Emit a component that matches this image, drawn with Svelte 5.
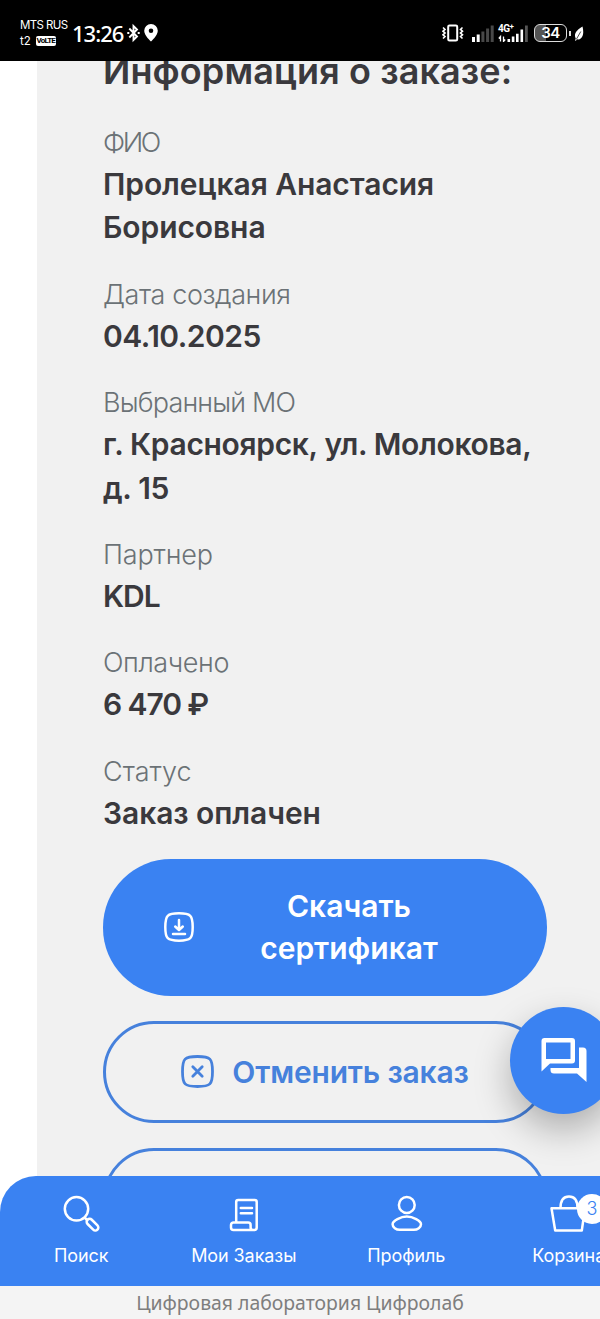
<script>
  const fields = [
    { label: 'ФИО', value: 'Пролецкая Анастасия Борисовна', ls: -2.4, vs: -0.08 },
    { label: 'Дата создания', value: '04.10.2025', ls: -0.42, vs: -0.5 },
    { label: 'Выбранный МО', value: 'г. Красноярск, ул. Молокова, д. 15', ls: -0.83, vs: -0.33 },
    { label: 'Партнер', value: 'KDL', ls: -0.15, vs: -1 },
    { label: 'Оплачено', value: '6 470 ₽', ls: -0.4, vs: -1.1 },
    { label: 'Статус', value: 'Заказ оплачен', ls: 0, vs: -0.08 },
  ];
</script>

<div class="screen">
  <header class="status">
    <div class="carrier">
      <span class="c1">MTS RUS</span>
      <span class="c2">t2 <b>VoLTE</b></span>
    </div>
    <span class="clock">13:26</span>
    <svg class="bt" width="13" height="20" viewBox="0 0 13 20" fill="none" stroke="#fff" stroke-width="1.900">
      <path d="M2.300 5.500 10 13.500 6.500 17V3L10 6.500 2.300 14.500" />
      <path d="M.3 10h2M10.700 10h2" stroke-width="2" />
    </svg>
    <svg class="pin" width="14" height="18" viewBox="0 0 14 18">
      <path fill="#fff" fill-rule="evenodd" d="M7 0a6.800 6.800 0 0 0-6.800 6.800C.2 11.500 7 17.600 7 17.600s6.800-6.100 6.800-10.800A6.800 6.800 0 0 0 7 0Zm0 4.500a2.300 2.300 0 1 1 0 4.600 2.300 2.300 0 0 1 0-4.600Z" />
    </svg>
    <div class="grow"></div>
    <svg class="vib" width="22" height="18" viewBox="0 0 22 18" fill="none" stroke="#fff">
      <rect x="6.200" y="1.500" width="9" height="15" rx="1.300" stroke-width="2" />
      <path d="M1 3.500 3 5.400 1 7.200 3 9 1 10.800 3 12.600 1 14.500M20.500 3.500l-2 1.900 2 1.800-2 1.800 2 1.800-2 1.800 2 1.900" stroke-width="1.600" />
    </svg>
    <svg class="sig" width="22" height="17" viewBox="0 0 22 17">
      <path fill="#fff" d="M0 12h3v5H0zM4.700 9.500h3V17h-3z" />
      <path fill="#484848" d="M9.400 6.500h3V17h-3zM14.100 3.500h3V17h-3zM18.700.5h3V17h-3z" />
    </svg>
    <div class="lte">
      <span>4G<sup>+</sup></span>
      <svg width="31" height="17" viewBox="0 0 31 17">
        <path fill="#fff" d="M9.500 14h2.600v3H9.500zM13.800 11.500h2.600V17h-2.600zM18 8.700h2.600V17H18zM22.500 4.500h2.600V17h-2.600z" />
        <path fill="#555" d="M27 .5h2.800V17H27z" />
        <path fill="none" stroke="#fff" stroke-width="1.300" d="M2.500 16.500v-5L.8 13.500M5.500 11.500v5l1.700-2" />
      </svg>
    </div>
    <div class="battery"><span>34</span></div>
    <i class="nub"></i>
    <svg class="leaf" width="10" height="15" viewBox="0 0 10 15">
      <path fill="#fff" d="M8.500.5C10 6.500 9.500 12 4.500 13.500l-1.800-.2-.7 1.500-1-.3.800-2C-.8 7.500 3 4 8.500.5Z" />
      <path d="M2.500 13 6.800 5.500" stroke="#000" stroke-width=".7" />
    </svg>
  </header>

  <main>
    <section class="card">
      <h1>Информация о заказе:</h1>
      <dl>
        {#each fields as f}
          <div class="field">
            <dt style="letter-spacing:{f.ls}px">{f.label}</dt>
            <dd style="letter-spacing:{f.vs}px">{f.value}</dd>
          </div>
        {/each}
      </dl>
      <div class="actions">
        <button class="btn filled">
          <svg width="30" height="30" viewBox="0 0 30 30" fill="none" stroke="#fff" stroke-width="2.500" stroke-linecap="round" stroke-linejoin="round">
            <path d="M15 1.300c11.700 0 13.700 2 13.700 13.700S26.700 28.700 15 28.700 1.300 26.700 1.300 15 3.300 1.300 15 1.300Z" />
            <path d="M15 8v9.500M11.200 14.500 15 18l3.800-3.500M9 22h12" />
          </svg>
          <span>Скачать сертификат</span>
        </button>
        <button class="btn outline">
          <svg width="33" height="33" viewBox="0 0 33 33" fill="none" stroke="#4681dc" stroke-width="2.800" stroke-linecap="round">
            <path d="M16.500 1.500c13 0 15 2 15 15s-2 15-15 15-15-2-15-15 2-15 15-15Z" />
            <path d="m11.800 11.800 9.400 9.400M21.200 11.800l-9.400 9.400" />
          </svg>
          <span>Отменить заказ</span>
        </button>
        <button class="btn outline" aria-label="Действие"></button>
      </div>
    </section>
    <button class="chat" aria-label="Чат">
      <svg width="46" height="46" viewBox="0 0 46 46">
        <path fill="#fff" fill-rule="evenodd" d="M3.500 0H31a3 3 0 0 1 3 3v19.500a3 3 0 0 1-3 3H9L.5 33.500V3a3 3 0 0 1 3-3ZM5 4.500V21h24.500V4.500Z" />
        <path fill="#fff" d="M38 9.500h4a3.500 3.500 0 0 1 3.500 3.500v31L36 35.500H13a3.500 3.500 0 0 1-3.500-3.500v-2H38Z" />
      </svg>
    </button>
  </main>

  <nav>
    <a class="tab">
      <svg width="36" height="36" viewBox="0 0 36 36" fill="none" stroke="#fff" stroke-width="2.500">
        <circle cx="13.500" cy="12.800" r="11.700" />
        <path d="m21.500 21.500 3.200 3.200" />
        <rect x="22.500" y="25.700" width="14" height="6" rx="3" transform="rotate(45 29.500 28.700)" />
      </svg>
      <span>Поиск</span>
    </a>
    <a class="tab">
      <svg width="36" height="36" viewBox="0 0 36 36" fill="none" stroke="#fff" stroke-width="2.500" stroke-linejoin="round" stroke-linecap="round">
        <path d="M10.200 26.500V6a2 2 0 0 1 2-2h16.500a2 2 0 0 1 2 2v25.500a2.500 2.500 0 0 1-2.500 2.500H7.500a2.500 2.500 0 0 1-2.500-2.500v-2.500a2.500 2.500 0 0 1 2.500-2.500h14.600a2.500 2.500 0 0 1 2.500 2.500v2.500a2.500 2.500 0 0 0 2.500 2.500M14.800 12h11.200M14.800 17.200h11.200" />
      </svg>
      <span>Мои Заказы</span>
    </a>
    <a class="tab">
      <svg width="36" height="36" viewBox="0 0 36 36" fill="none" stroke="#fff" stroke-width="2.500">
        <circle cx="18.800" cy="9" r="7.900" />
        <path d="M18.800 20.500c6 0 14.200 4.200 14.200 7.700 0 3.200-3.500 5.600-7.200 5.600h-14c-3.700 0-7.200-2.400-7.200-5.600 0-3.500 8.200-7.700 14.200-7.700Z" />
      </svg>
      <span>Профиль</span>
    </a>
    <a class="tab">
      <svg width="36" height="36" viewBox="0 0 36 36" fill="none" stroke="#fff" stroke-width="2.500" stroke-linejoin="round">
        <path d="M.5 12.200h33.500L30.800 34.500H4.200ZM9.500 12.200C9.500 4.500 12.500.5 18 .5s8.500 4 8.500 11.700" />
      </svg>
      <span>Корзина</span>
      <b class="badge">3</b>
    </a>
  </nav>
  <footer>Цифровая лаборатория Цифролаб</footer>
</div>

<style>
  :global(body) { margin: 0; }
  .screen {
    width: 600px; height: 1319px; overflow: hidden; background: #fff;
    display: flex; flex-direction: column; position: relative;
    font-family: Inter, sans-serif; color: #3a393d;
  }
  .status {
    height: 61px; flex: none; background: #000; color: #fff; box-sizing: border-box;
    display: flex; align-items: center; padding: 5px 16px 0 20px;
  }
  .carrier { display: flex; flex-direction: column; width: 52px; line-height: 16px; white-space: nowrap; }
  .c1 { font-size: 11.500px; letter-spacing: -.6px; }
  .c2 { display: flex; gap: 5px; align-items: center; font-size: 11.500px; }
  .c2 b { background: #fff; color: #000; font: 700 8px/10px Roboto, sans-serif; border-radius: 2px; letter-spacing: -.8px; width: 20px; text-align: center; }
  .clock { font: 500 22px/28px "Noto Sans", sans-serif; width: 54px; letter-spacing: -1px; margin-top: -1px; }
  .bt { margin-left: 1px; }
  .pin { margin-left: 4px; }
  .grow { flex: 1; }
  .vib { margin-right: 8px; }
  .sig { margin-right: 4px; }
  .lte { position: relative; width: 31px; height: 17px; margin-right: 5px; }
  .lte svg { display: block; }
  .lte span { position: absolute; left: 0; top: -1px; font: 700 10px/10px Roboto, sans-serif; letter-spacing: -.5px; }
  .lte sup { font-size: 8px; line-height: 0; vertical-align: 3px; }
  .battery {
    box-sizing: border-box; width: 33px; height: 18px; border: 1.500px solid #ddd; border-radius: 6px;
    background: linear-gradient(90deg, #555 34%, #000 34%); text-align: center;
    font: 600 15px/16px Inter, sans-serif; letter-spacing: -.5px;
  }
  .nub { width: 2px; height: 5px; background: #ddd; margin: 0 3px 0 2px; }

  main { flex: 1; min-height: 0; position: relative; padding-left: 37px; }
  .card { height: 100%; box-sizing: border-box; background: #f1f1f1; overflow: hidden; padding: 0 53px 0 66px; }
  h1 { margin: -13px 0 0; font-size: 36px; line-height: 46px; font-weight: 600; white-space: nowrap; letter-spacing: .1px; }
  dl { margin: 28px 0 0; display: flex; flex-direction: column; gap: 24px; }
  dt { font-size: 27px; line-height: 41px; font-weight: 300; color: #6b7276; white-space: nowrap; }
  dd { margin: 0; font-size: 30px; line-height: 43.400px; font-weight: 600; }
  .actions { margin-top: 23.500px; display: flex; flex-direction: column; gap: 25px; }
  .btn {
    flex: none; box-sizing: border-box; width: 444px; height: 102px; padding: 0; border-radius: 68px;
    border: 3px solid #4681dc; background: none; color: #4681dc;
    display: flex; align-items: center; justify-content: center; gap: 18px;
    font: 600 30px/42px Inter, sans-serif;
  }
  .outline span { letter-spacing: -.18px; }
  .filled { height: 137px; border: 0; background: #3a82f2; color: #fff; justify-content: flex-start; padding-left: 61px; gap: 55px; }
  .filled span { width: 200px; }
  .chat {
    position: absolute; left: 510px; top: 946px; width: 107px; height: 107px; border: 0; border-radius: 50%;
    background: #3a82f2; padding: 0; display: flex; align-items: center; justify-content: center;
    box-shadow: 0 16px 36px rgba(0, 0, 0, .28);
  }
  nav {
    height: 110px; flex: none; background: #3a82f2; border-radius: 36px 0 0 0; position: relative; color: #fff;
    display: grid; grid-template-columns: repeat(4, 162.500px); box-sizing: border-box; padding-top: 20px; overflow: hidden;
  }
  .tab { display: flex; flex-direction: column; align-items: center; gap: 9px; font-size: 18px; line-height: 30px; position: relative; letter-spacing: -.08px; }
  .tab svg { overflow: visible; }
  .badge {
    position: absolute; left: 89.500px; top: -2px; width: 30px; height: 30px; border-radius: 50%;
    background: #fff; color: #3a82f2; font-size: 18px; font-weight: 300; text-align: center; line-height: 30px;
  }
  footer { height: 33px; flex: none; background: #f4f4f4; color: #7e7e7e; text-align: center; font: 19.400px/34px "Noto Sans", sans-serif; }
</style>
